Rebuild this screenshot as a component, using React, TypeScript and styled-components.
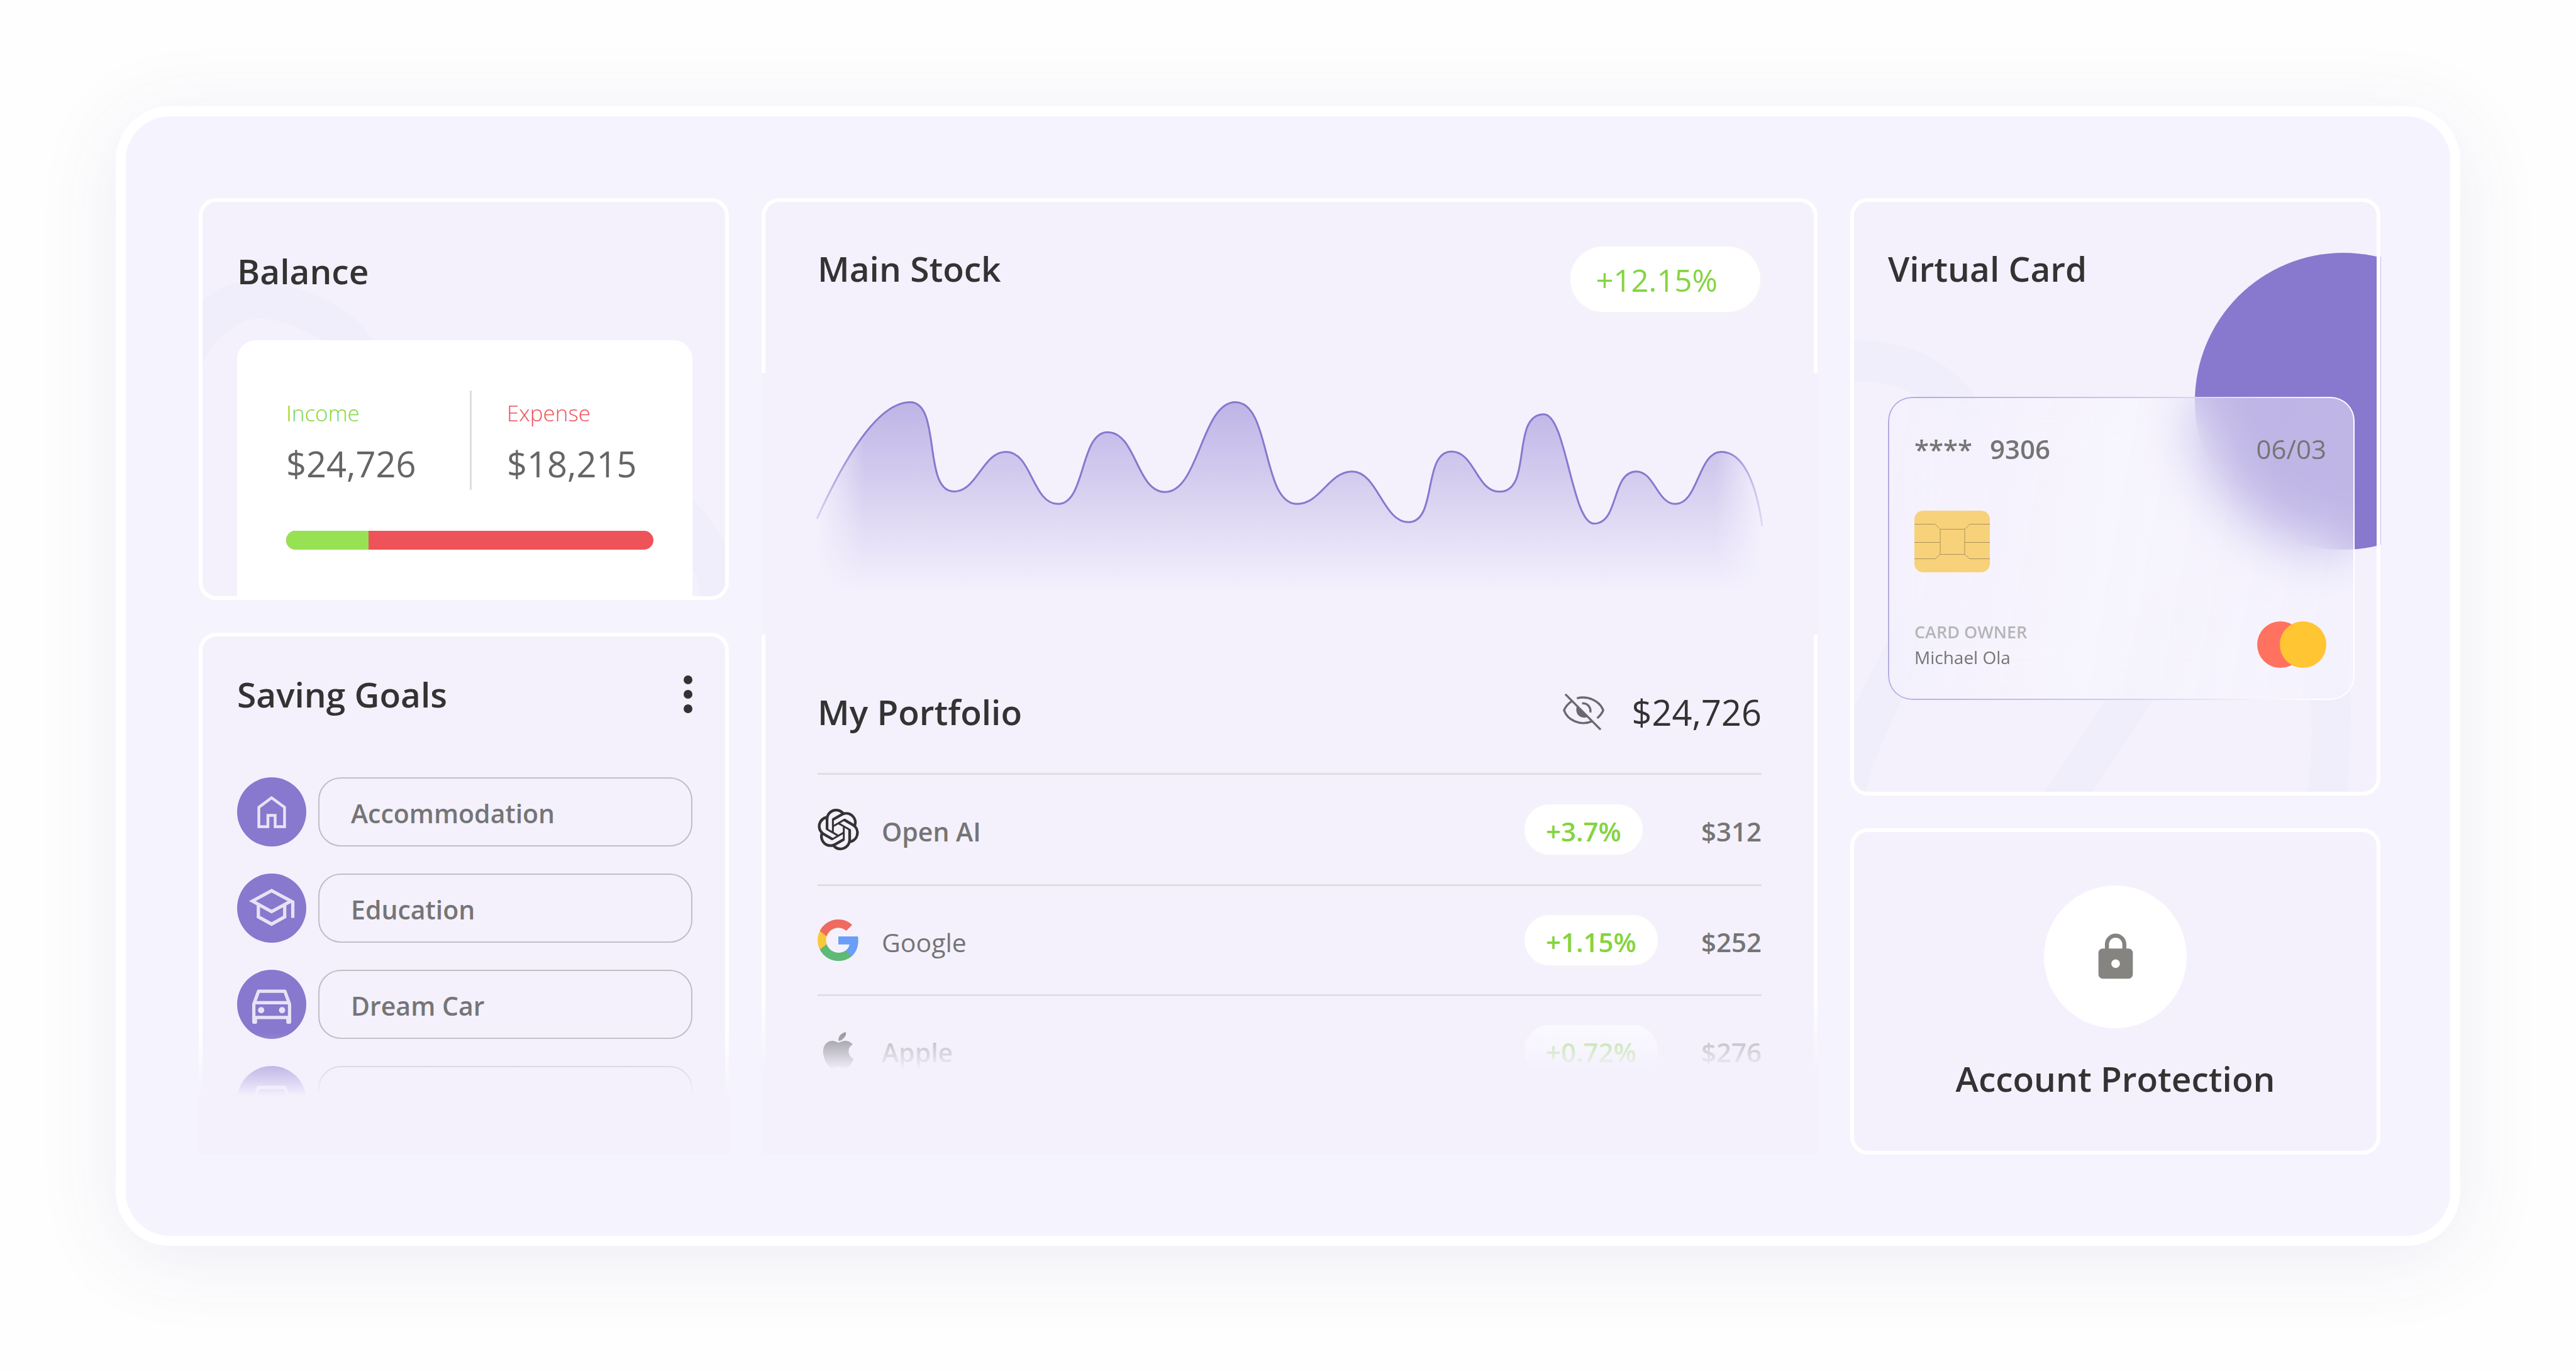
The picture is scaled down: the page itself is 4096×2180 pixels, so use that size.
import React from "react";
import styled, { createGlobalStyle } from "styled-components";
import { SiOpenai } from "react-icons/si";
import { FaApple } from "react-icons/fa";
import { MdLock } from "react-icons/md";

const color = {
  page: "#fefefe",
  frame: "#f5f3fe",
  card: "#f4f1fd",
  cardClear: "rgba(244, 241, 253, 0)",
  decor: "#f0eefb",
  ink: "#333333",
  grey: "#666564",
  muted: "#757575",
  faint: "#b5b5b5",
  rule: "#e0dde4",
  purple: "#8878ce",
  green: "#84d43f",
  greenBar: "#96e253",
  red: "#ee5359",
};

const GlobalStyle = createGlobalStyle`
  *, *::before, *::after { box-sizing: border-box; }
  body {
    margin: 0;
    background: ${color.page};
    color: ${color.ink};
    font-family: "Open Sans", "Noto Sans", sans-serif;
  }
  h2, p, ul { margin: 0; padding: 0; }
  button { font-family: inherit; cursor: pointer; }
  svg { display: block; }
`;

const Page = styled.main`
  min-height: 100vh;
  padding: 169px 184px 199px;
`;

const Frame = styled.div`
  display: grid;
  grid-template-columns: minmax(0, 843fr) minmax(0, 1679fr) minmax(0, 843fr);
  gap: 52px;
  padding: 130px 111px 129px 116px;
  border: 16px solid #fff;
  border-radius: 86px;
  background: ${color.frame};
  box-shadow: 0 20px 130px rgba(84, 72, 150, 0.1);
`;

const Column = styled.div`
  display: flex;
  flex-direction: column;
  gap: 52px;
`;

const Card = styled.section`
  position: relative;
  border: 6px solid #fff;
  border-radius: 28px;
  background: ${color.card};
`;

const Title = styled.h2`
  font-size: 55px;
  line-height: 80px;
  font-weight: 600;
  color: ${color.ink};
  white-space: nowrap;
`;

const Decor = styled.div`
  position: absolute;
  inset: 0;
  overflow: hidden;
  border-radius: 22px;
  pointer-events: none;

  svg {
    width: 100%;
    height: 100%;
    fill: ${color.decor};
  }
`;

const Fade = styled.div<{ $height: number; $solidAt: number }>`
  position: absolute;
  left: -6px;
  right: -6px;
  bottom: 0;
  height: ${(p) => p.$height}px;
  background: linear-gradient(${color.cardClear}, ${color.card} ${(p) => p.$solidAt}%);
  pointer-events: none;
`;

/* Balance */

const BalanceCard = styled(Card)`
  padding: 70px 52px 0 55px;
`;

const BalanceTitle = styled(Title)`
  position: relative;
`;

const BalanceBox = styled.div`
  position: relative;
  margin: 70px 0 -6px;
  padding: 80px 62px 80px 78px;
  border-radius: 30px 30px 0 0;
  background: #fff;
`;

const Stats = styled.div`
  display: grid;
  grid-template-columns: 1fr 1fr;
  height: 158px;
`;

const Stat = styled.div<{ $divided?: boolean }>`
  display: flex;
  flex-direction: column;
  gap: 16px;
  padding-top: 12px;
  padding-left: ${(p) => (p.$divided ? 56 : 0)}px;
  border-left: ${(p) => (p.$divided ? "3px solid #dedede" : "none")};
`;

const StatLabel = styled.span<{ $color: string }>`
  font-size: 35px;
  line-height: 48px;
  font-weight: 300;
  color: ${(p) => p.$color};
`;

const StatValue = styled.span`
  font-size: 56px;
  line-height: 80px;
  font-weight: 400;
  color: ${color.grey};
`;

const Ratio = styled.div`
  display: flex;
  height: 30px;
  margin-top: 65px;
  overflow: hidden;
  border-radius: 15px;
  background: ${color.red};
`;

const RatioIncome = styled.div`
  width: 22.5%;
  background: ${color.greenBar};
`;

/* Saving goals */

const GoalsCard = styled(Card)`
  flex: 1;
  padding: 52px 52px 28px 55px;
  border-bottom: 0;
  border-radius: 28px 28px 0 0;
`;

const CardHead = styled.header`
  display: flex;
  justify-content: space-between;
  align-items: center;
`;

const MoreButton = styled.button`
  display: flex;
  flex-direction: column;
  gap: 9px;
  padding: 0;
  border: 0;
  background: none;
`;

const Dot = styled.span`
  width: 14px;
  height: 14px;
  border-radius: 50%;
  background: ${color.ink};
`;

const GoalList = styled.ul`
  display: flex;
  flex-direction: column;
  gap: 43px;
  margin-top: 92px;
  list-style: none;
`;

const GoalRow = styled.li`
  display: flex;
  gap: 19px;
`;

const GoalIcon = styled.span`
  flex: none;
  width: 110px;
  height: 110px;
  border-radius: 50%;
  background: ${color.purple};

  svg {
    width: 100%;
    height: 100%;
    fill: none;
    stroke: #e7e3f6;
  }
`;

const GoalButton = styled.button<{ $small?: boolean }>`
  flex: 1;
  height: 110px;
  padding: 4px 50px 0;
  border: 2px solid #c0bec5;
  border-radius: 36px;
  background: none;
  color: ${color.muted};
  font-size: ${(p) => (p.$small ? 35 : 41)}px;
  line-height: 56px;
  font-weight: 600;
  text-align: left;
`;

/* Stock and portfolio */

const CenterPanel = styled.div`
  display: flex;
  flex-direction: column;
  border-radius: 28px 28px 0 0;
  background: ${color.card};
`;

const StockHead = styled.header`
  display: flex;
  justify-content: space-between;
  align-items: flex-start;
  height: 278px;
  padding: 66px 83px 0;
  border: 6px solid #fff;
  border-bottom: 0;
  border-radius: 28px 28px 0 0;
`;

const StockChange = styled.span`
  margin-top: 3px;
  padding: 19px 68px 17px 41px;
  border: 2px solid #f4f3f7;
  border-radius: 54px;
  background: #fff;
  color: ${color.green};
  font-size: 49px;
  line-height: 68px;
  font-weight: 400;
`;

const ChartWrap = styled.div`
  padding: 43px 88px 65px;

  svg {
    width: 100%;
    height: 308px;
    overflow: visible;
  }
`;

const Portfolio = styled.section`
  position: relative;
  flex: 1;
  padding: 83px 83px 60px;
  border: 6px solid #fff;
  border-width: 0 6px;
`;

const PortfolioHead = styled(CardHead)`
  padding-bottom: 57px;
  border-bottom: 3px solid ${color.rule};
`;

const Total = styled.div`
  display: flex;
  align-items: center;
  gap: 42px;
  font-size: 56px;
  line-height: 80px;
  font-weight: 400;
`;

const EyeButton = styled.button`
  padding: 0;
  border: 0;
  background: none;

  svg {
    width: 67px;
    height: 60px;
    fill: none;
    stroke: #6c6871;
    stroke-width: 13;
  }
`;

const Holdings = styled.table`
  width: 100%;
  border-collapse: collapse;
  table-layout: fixed;
  font-size: 41px;
  line-height: 56px;
  color: ${color.muted};
`;

const HoldingRow = styled.tr`
  height: 175px;
  border-bottom: 3px solid ${color.rule};
`;

const Cell = styled.td`
  padding: 0;
  text-align: left;
`;

const PriceCell = styled(Cell)`
  width: 165px;
  padding-top: 6px;
  font-size: 42px;
  font-weight: 600;
  text-align: right;
`;

const ChangeCell = styled(Cell)`
  width: 214px;
  font-size: 42px;
`;

const Company = styled.div<{ $weight: number }>`
  display: flex;
  align-items: center;
  gap: 36px;
  font-weight: ${(p) => p.$weight};

  svg {
    width: 66px;
    height: 66px;
  }

  span {
    padding-top: 6px;
  }
`;

const Change = styled.span`
  display: inline-block;
  padding: 15px 34px 9px;
  border: 2px solid #f4f3f7;
  border-radius: 42px;
  background: #fff;
  color: ${color.green};
  font-weight: 600;
  vertical-align: middle;
`;

/* Virtual card */

const VirtualCardPanel = styled(Card)`
  padding: 66px 35px 146px 54px;

  &::after {
    content: "";
    position: absolute;
    top: 87px;
    right: -7px;
    width: 1px;
    height: 458px;
    background: #c3b9e6;
  }
`;

const Disc = styled.div`
  position: absolute;
  top: 81px;
  right: -183px;
  width: 472px;
  height: 472px;
  border-radius: 50%;
  background: ${color.purple};
`;

const VirtualTitle = styled(Title)`
  position: relative;
`;

const Glass = styled.div`
  position: relative;
  display: flex;
  flex-direction: column;
  margin-top: 164px;
  padding: 55px 45px 48px 42px;
  border-radius: 38px;
  background: linear-gradient(
    100deg,
    rgba(244, 241, 253, 0.45),
    rgba(250, 249, 255, 0.47) 45%,
    rgba(247, 245, 255, 0.5)
  );
  backdrop-filter: blur(46px);
  color: ${color.muted};

  &::before {
    content: "";
    position: absolute;
    inset: 0;
    padding: 2px;
    border-radius: 38px;
    background: linear-gradient(98deg, #b3a8e0, #cfc7ed 50%, #fff 92%);
    mask: linear-gradient(#000 0 0) content-box exclude, linear-gradient(#000 0 0);
  }
`;

const GlassRow = styled.div`
  display: flex;
  justify-content: space-between;
  align-items: center;
`;

const CardNumber = styled.p`
  display: flex;
  gap: 28px;
  font-size: 42px;
  line-height: 56px;
  font-weight: 600;
`;

const Expiry = styled.p`
  font-size: 42px;
  line-height: 56px;
  font-weight: 400;
`;

const Chip = styled.svg`
  width: 120px;
  height: 98px;
  margin: 70px 0 75px;
  border-radius: 14px;
  background: #f8d27a;
  fill: none;
  stroke: #a8945c;
  stroke-width: 1;
`;

const OwnerLine = styled.p<{ $heading?: boolean }>`
  font-size: ${(p) => (p.$heading ? 27 : 28)}px;
  line-height: 40px;
  font-weight: ${(p) => (p.$heading ? 600 : 400)};
  color: ${(p) => (p.$heading ? color.faint : color.muted)};
`;

const Network = styled.svg`
  width: 110px;
  height: 74px;
`;

/* Account protection */

const ProtectionCard = styled(Card)`
  flex: 1;
  display: flex;
  flex-direction: column;
  align-items: center;
  gap: 40px;
  padding: 85px 40px 75px;
`;

const LockBadge = styled.span`
  display: grid;
  place-items: center;
  width: 227px;
  height: 227px;
  border-radius: 50%;
  background: #fff;
  color: #858481;
`;

const HomeIcon = () => (
  <svg viewBox="54 57 420 420" strokeWidth="17" aria-hidden="true">
    <path d="M186 357V239L263.500 181L342 239V357H285V288H241V357Z" />
  </svg>
);

const SchoolIcon = () => (
  <svg viewBox="54 42 420 420" strokeWidth="20" aria-hidden="true">
    <path d="M147 209L263.500 146L381 209L263.500 273ZM392 209V311M183 236V305L263.500 349L343 305V236" />
  </svg>
);

const CarIcon = () => (
  <svg viewBox="54 57 420 420" strokeWidth="20" strokeLinejoin="round" aria-hidden="true">
    <path d="M155.500 266L184 187H344L372.500 266V347H155.500ZM160 257H368" />
    <g fill="#e7e3f6" stroke="none">
      <rect x="145.500" y="337" width="30" height="48" rx="9" />
      <rect x="352.500" y="337" width="30" height="48" rx="9" />
      <circle cx="200" cy="302" r="19" />
      <circle cx="327" cy="302" r="19" />
    </g>
  </svg>
);

const EyeOffIcon = () => (
  <svg viewBox="97 68 256 230" aria-hidden="true">
    <path d="M182 100C250 82 320 115 343 173C336 190 320 210 306 221" />
    <path d="M150 118C130 132 112 152 104 173C125 235 205 270 275 240" />
    <path d="M214 131C245 128 268 152 265 186" />
    <path d="M182 148C170 185 190 218 225 218C235 218 243 216 248 213Z" fill="#6c6871" stroke="none" />
    <path d="M112 75L327 291" />
  </svg>
);

const GoogleIcon = () => (
  <svg viewBox="1 1 22 22" aria-hidden="true">
    <path fill="#6a9ef8" d="M22.560 12.250c0-.78-.07-1.530-.2-2.250H12v4.260h5.920c-.26 1.370-1.040 2.530-2.210 3.310v2.770h3.570c2.080-1.920 3.280-4.740 3.280-8.090z" />
    <path fill="#5fb977" d="M12 23c2.970 0 5.460-.98 7.280-2.660l-3.570-2.770c-.98.66-2.230 1.060-3.710 1.060-2.860 0-5.290-1.930-6.160-4.530H2.180v2.840C3.990 20.530 7.700 23 12 23z" />
    <path fill="#fac83c" d="M5.840 14.090c-.22-.66-.35-1.360-.35-2.090s.13-1.430.35-2.090V7.070H2.180C1.430 8.550 1 10.220 1 12s.43 3.450 1.180 4.930l2.850-2.220.81-.62z" />
    <path fill="#ef6a5f" d="M12 5.380c1.620 0 3.060.56 4.210 1.640l3.150-3.150C17.450 2.090 14.970 1 12 1 7.700 1 3.990 3.470 2.180 7.070l3.660 2.840c.87-2.600 3.300-4.530 6.160-4.530z" />
  </svg>
);

/* Turning points of the price line: x, y, and how flat the curve stays at each end. */
const stockPoints: [number, number, number][] = [
  [240, 788, 0],
  [303, 1101, 0.72],
  [378, 962, 0.45],
  [453, 1145, 0.5],
  [524, 893, 0.56],
  [607, 1103, 0.5],
  [708, 788, 0.48],
  [797, 1145, 0.58],
  [876, 1031, 0.42],
  [957, 1209, 0.45],
  [1019, 961, 0.68],
  [1088, 1102, 0.48],
  [1152, 830, 0.76],
  [1224, 1214, 0.44],
  [1285, 1031, 0.6],
  [1341, 1145, 0.46],
  [1407, 962, 0.5],
];

const stockLine =
  "M106 1197C150 960 196 788 240 788" +
  stockPoints
    .slice(1)
    .map(([x, y, k], i) => {
      const [px, py] = stockPoints[i];
      const reach = (x - px) * k;
      return `C${px + reach} ${py} ${x - reach} ${y} ${x} ${y}`;
    })
    .join("") +
  "C1440 962 1458 1080 1466 1222";

const StockChart = () => (
  <svg viewBox="106 780 1360 680" preserveAspectRatio="none" role="img" aria-label="Main stock price">
    <defs>
      <linearGradient id="stock-fill" gradientUnits="userSpaceOnUse" x1="0" y1="788" x2="0" y2="1452">
        <stop offset="0" stopColor="#8878ce" stopOpacity="0.5" />
        <stop offset="1" stopColor="#8878ce" stopOpacity="0" />
      </linearGradient>
      <linearGradient id="stock-edge" gradientUnits="userSpaceOnUse" x1="106" y1="0" x2="1466" y2="0">
        <stop offset="0" stopColor="#fff" stopOpacity="0" />
        <stop offset="0.05" stopColor="#fff" />
        <stop offset="0.95" stopColor="#fff" />
        <stop offset="1" stopColor="#fff" stopOpacity="0" />
      </linearGradient>
      <linearGradient id="stock-stroke" gradientUnits="userSpaceOnUse" x1="106" y1="0" x2="1466" y2="0">
        <stop offset="0" stopColor="#8878ce" stopOpacity="0.25" />
        <stop offset="0.05" stopColor="#8878ce" />
        <stop offset="0.96" stopColor="#8878ce" />
        <stop offset="1" stopColor="#8878ce" stopOpacity="0.2" />
      </linearGradient>
      <mask id="stock-mask" maskUnits="userSpaceOnUse" x="106" y="780" width="1360" height="680">
        <rect x="106" y="780" width="1360" height="680" fill="url(#stock-edge)" />
      </mask>
    </defs>
    <path d={`${stockLine}V1460H106Z`} fill="url(#stock-fill)" mask="url(#stock-mask)" />
    <path d={stockLine} fill="none" stroke="url(#stock-stroke)" strokeWidth="3" vectorEffect="non-scaling-stroke" />
  </svg>
);

const goals = [
  { name: "Accommodation", icon: <HomeIcon /> },
  { name: "Education", icon: <SchoolIcon /> },
  { name: "Dream Car", icon: <CarIcon /> },
  { name: "Accommodation", icon: <CarIcon />, small: true },
];

const holdings = [
  { name: "Open AI", icon: <SiOpenai color="#333" />, change: "+3.7%", price: "$312", weight: 600 },
  { name: "Google", icon: <GoogleIcon />, change: "+1.15%", price: "$252", weight: 400 },
  { name: "Apple", icon: <FaApple color="#333" />, change: "+0.72%", price: "$276", weight: 600 },
];

export default function App() {
  return (
    <>
      <GlobalStyle />
      <Page>
        <Frame>
          <Column>
            <BalanceCard>
              <Decor>
                <svg viewBox="243 337 1235 1176" preserveAspectRatio="none" aria-hidden="true">
                  <path d="M243 630C280 595 310 575 350 575C500 575 610 670 645 750H528C480 715 420 685 377 685C320 685 275 750 243 815Z" />
                  <path d="M1402 1228C1440 1270 1465 1320 1478 1360V1513H1418C1415 1480 1410 1455 1402 1430Z" />
                </svg>
              </Decor>
              <BalanceTitle>Balance</BalanceTitle>
              <BalanceBox>
                <Stats>
                  <Stat>
                    <StatLabel $color={color.green}>Income</StatLabel>
                    <StatValue>$24,726</StatValue>
                  </Stat>
                  <Stat $divided>
                    <StatLabel $color={color.red}>Expense</StatLabel>
                    <StatValue>$18,215</StatValue>
                  </Stat>
                </Stats>
                <Ratio>
                  <RatioIncome />
                </Ratio>
              </BalanceBox>
            </BalanceCard>

            <GoalsCard>
              <CardHead>
                <Title>Saving Goals</Title>
                <MoreButton aria-label="More options">
                  <Dot />
                  <Dot />
                  <Dot />
                </MoreButton>
              </CardHead>
              <GoalList>
                {goals.map((goal, i) => (
                  <GoalRow key={i}>
                    <GoalIcon>{goal.icon}</GoalIcon>
                    <GoalButton $small={goal.small}>{goal.name}</GoalButton>
                  </GoalRow>
                ))}
              </GoalList>
              <Fade $height={194} $solidAt={52} />
            </GoalsCard>
          </Column>

          <CenterPanel>
            <StockHead>
              <Title>Main Stock</Title>
              <StockChange>+12.15%</StockChange>
            </StockHead>
            <ChartWrap>
              <StockChart />
            </ChartWrap>
            <Portfolio>
              <PortfolioHead>
                <Title>My Portfolio</Title>
                <Total>
                  <EyeButton aria-label="Hide balance">
                    <EyeOffIcon />
                  </EyeButton>
                  $24,726
                </Total>
              </PortfolioHead>
              <Holdings>
                <tbody>
                  {holdings.map((item) => (
                    <HoldingRow key={item.name}>
                      <Cell>
                        <Company $weight={item.weight}>
                          {item.icon}
                          <span>{item.name}</span>
                        </Company>
                      </Cell>
                      <ChangeCell>
                        <Change>{item.change}</Change>
                      </ChangeCell>
                      <PriceCell>{item.price}</PriceCell>
                    </HoldingRow>
                  ))}
                </tbody>
              </Holdings>
              <Fade $height={258} $solidAt={48} />
            </Portfolio>
          </CenterPanel>

          <Column>
            <VirtualCardPanel>
              <Decor>
                <svg viewBox="72 59 1235 1457" preserveAspectRatio="none" aria-hidden="true">
                  <path d="M72 402C200 395 310 460 357 540L400 640H330L223 540C180 515 130 498 72 502Z" />
                  <path d="M200 1040L150 1145C120 1210 90 1260 72 1310V1516H100C120 1430 150 1370 185 1290L260 1120Z" />
                  <path d="M523 1516L667 1290L860 1000L960 1020L780 1290L636 1516Z" />
                  <path d="M1144 1516C1155 1430 1155 1350 1150 1290L1120 1050H1200L1246 1290C1247 1370 1243 1450 1238 1516Z" />
                </svg>
                <Disc />
              </Decor>
              <VirtualTitle>Virtual Card</VirtualTitle>
              <Glass>
                <GlassRow>
                  <CardNumber>
                    <span>****</span>
                    <span>9306</span>
                  </CardNumber>
                  <Expiry>06/03</Expiry>
                </GlassRow>
                <Chip viewBox="0 0 120 98" aria-hidden="true">
                  <path d="M0 21.500H33L41 29.500H80L88 21.500H120M0 76.500H33L41 69.500H80L88 76.500H120M41 29.500V69.500M80 29.500V69.500M0 50.500H41M80 50.500H120" />
                </Chip>
                <GlassRow>
                  <div>
                    <OwnerLine $heading>CARD OWNER</OwnerLine>
                    <OwnerLine>Michael Ola</OwnerLine>
                  </div>
                  <Network viewBox="0 0 110 74" role="img" aria-label="Mastercard">
                    <circle cx="37" cy="37" r="37" fill="#ff7260" />
                    <circle cx="73" cy="37" r="37" fill="#ffc533" />
                  </Network>
                </GlassRow>
              </Glass>
            </VirtualCardPanel>

            <ProtectionCard>
              <LockBadge>
                <MdLock size={82} />
              </LockBadge>
              <Title>Account Protection</Title>
            </ProtectionCard>
          </Column>
        </Frame>
      </Page>
    </>
  );
}
